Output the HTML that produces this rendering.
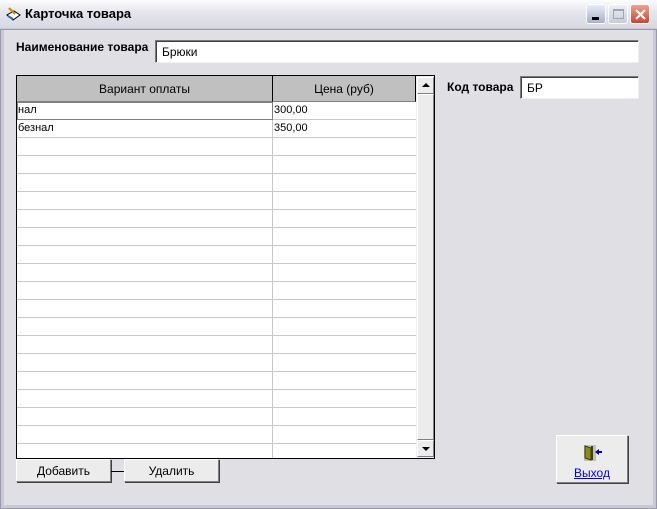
<!DOCTYPE html>
<html><head><meta charset="utf-8"><style>
*{box-sizing:border-box;margin:0;padding:0}
body{width:657px;height:509px;overflow:hidden;font-family:"Liberation Sans",sans-serif;font-size:11px;background:#e0dfe3;position:relative}
.abs{position:absolute}
.title{left:0;top:0;width:657px;height:29px;background:linear-gradient(#fdfdfe,#e6e6ee 40%,#d8d8e2);border-bottom:1px solid #c8c8d0}
.frame{left:0;top:29px;width:657px;height:480px;border:4px solid #c8c8d6;border-top:none;outline:1px solid #9a9aac;outline-offset:-1px}
.inp{background:#fff;border-top:1px solid #7a7a7a;border-left:1px solid #7a7a7a;border-right:1px solid #f0f0f0;border-bottom:1px solid #f0f0f0;box-shadow:inset 1px 1px 0 #404040;font-size:12px;padding:4px 0 0 6px}
.lbl{font-weight:bold;font-size:12px}
.grid{left:16px;top:75px;width:419px;height:384px;border:1px solid #000;background:#fff;overflow:hidden}
.hdr{top:0;height:26px;background:#c0c0c0;border-right:1px solid #000;border-bottom:1px solid #808080;text-align:center;font-size:12px;line-height:26px;color:#000}
.rows{left:0;top:26px;width:400px;height:360px;background:repeating-linear-gradient(#fff 0 17px,#c8c8c8 17px 18px)}
.vl{top:26px;width:1px;height:360px;background:#c8c8c8}
.cell{font-size:11px;height:18px;line-height:17px;padding-left:1px}
.btn{background:#ececec;border:1px solid;border-color:#fff #808080 #808080 #fff;box-shadow:1px 1px 0 #404040;text-align:center;font-size:12px}
.sbb{background:#ececec;border:1px solid;border-color:#fff #808080 #808080 #fff}
.wb{top:4px;width:20px;height:20px;border-radius:3px;border:1px solid #fff}
</style></head><body>
<div class="abs title"></div>
<div class="abs" style="left:5px;top:6px;width:17px;height:16px">
<svg width="17" height="16"><path d="M2 9 L8 14 L15 9 L9 5 Z" fill="#fff" stroke="#000"/><path d="M4 2 L10 8" stroke="#c80" stroke-width="2"/><path d="M3 10 L8 13" stroke="#36c" stroke-width="2"/></svg></div>
<div class="abs" style="left:25px;top:6px;font-weight:bold;font-size:13px;color:#000">Карточка товара</div>
<div class="abs wb" style="left:586px;background:linear-gradient(#e8ecf8,#a8b0c8)"><div class="abs" style="left:5px;top:12px;width:7px;height:3px;background:#000"></div></div>
<div class="abs wb" style="left:608px;background:linear-gradient(#eef0f6,#c8ccd8)"><div class="abs" style="left:4px;top:4px;width:11px;height:10px;border:1px solid #a0a4b4;border-top-width:2px"></div></div>
<div class="abs wb" style="left:630px;background:linear-gradient(#f0a090,#c84830)"><svg class="abs" style="left:3px;top:3px" width="13" height="13"><path d="M2 2L11 11M11 2L2 11" stroke="#fff" stroke-width="2"/></svg></div>
<div class="abs frame"></div>

<div class="abs lbl" style="left:16px;top:40px">Наименование товара</div>
<div class="abs inp" style="left:155px;top:40px;width:484px;height:23px">Брюки</div>
<div class="abs lbl" style="left:447px;top:80px">Код товара</div>
<div class="abs inp" style="left:520px;top:76px;width:119px;height:23px">БР</div>

<div class="abs grid">
 <div class="abs hdr" style="left:0;width:256px">Вариант оплаты</div>
 <div class="abs hdr" style="left:256px;width:143px">Цена (руб)</div>
 <div class="abs rows"></div>
 <div class="abs vl" style="left:255px"></div>
 <div class="abs vl" style="left:399px"></div>
 <div class="abs cell" style="left:0;top:26px;width:256px;outline:1px solid #808080;outline-offset:-1px;border-bottom:1px solid #c8c8c8">нал</div>
 <div class="abs cell" style="left:256px;top:26px">300,00</div>
 <div class="abs cell" style="left:0;top:44px">безнал</div>
 <div class="abs cell" style="left:256px;top:44px">350,00</div>
 <div class="abs" style="left:399px;top:0;width:18px;height:382px;background:#f0f0f0"></div>
 <div class="abs sbb" style="left:400px;top:1px;width:17px;height:17px"><svg class="abs" style="left:4px;top:5px" width="8" height="5"><path d="M0 4L4 0L8 4Z"/></svg></div>
 <div class="abs sbb" style="left:400px;top:18px;width:17px;height:346px;background:#ececec"></div>
 <div class="abs sbb" style="left:400px;top:364px;width:17px;height:17px"><svg class="abs" style="left:4px;top:6px" width="8" height="5"><path d="M0 0L8 0L4 4Z"/></svg></div>
</div>

<div class="abs btn" style="left:16px;top:459px;width:95px;height:23px;line-height:22px">Добавить</div>
<div class="abs" style="left:111px;top:471px;width:13px;height:1px;background:#000"></div>
<div class="abs btn" style="left:124px;top:459px;width:95px;height:23px;line-height:22px">Удалить</div>

<div class="abs btn" style="left:556px;top:435px;width:72px;height:48px">
 <svg class="abs" style="left:27px;top:9px" width="18" height="16"><rect x="0" y="0" width="12" height="16" fill="#c0c0c0"/><path d="M1 1L7 3L7 15L1 13Z" fill="#8a8a20" stroke="#404000"/><rect x="7" y="1" width="2" height="14" fill="#404000"/><path d="M11 7L15 4L15 10Z" fill="#0000c0"/><rect x="14" y="6" width="4" height="2" fill="#0000c0"/></svg>
 <div class="abs" style="left:0;top:30px;width:70px;text-align:center;color:#0000ee;text-decoration:underline;font-size:12px">Выход</div>
</div>
</body></html>
